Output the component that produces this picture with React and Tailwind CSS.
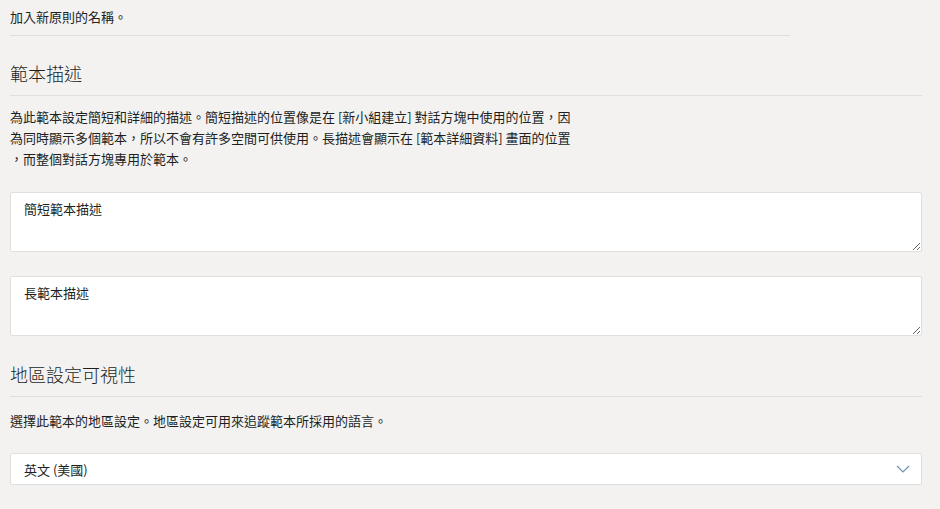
import React from "react";

function Heading({ children }) {
  return (
    <h2 className="text-[18px] leading-[24px] font-light text-[#201f1e] pb-[10px] border-b border-[#e1dfdd]">
      {children}
    </h2>
  );
}

export default function App() {
  return (
    <div
      className="w-[940px] h-[509px] overflow-hidden bg-[#f3f2f1] pl-[10px] pr-[18px] text-[13px] leading-[21px] text-[#201f1e]"
      style={{ fontFamily: '"Noto Sans CJK TC", "Noto Sans", sans-serif' }}
    >
      {/* name hint */}
      <div className="w-[780px] pt-[6px] pb-[8px] border-b border-[#e1dfdd]">加入新原則的名稱。</div>

      {/* 範本描述 */}
      <div className="mt-[25px]">
        <Heading>範本描述</Heading>
      </div>
      <p className="mt-[10px]">
        為此範本設定簡短和詳細的描述。簡短描述的位置像是在 [新小組建立] 對話方塊中使用的位置，因
        <br />
        為同時顯示多個範本，所以不會有許多空間可供使用。長描述會顯示在 [範本詳細資料] 畫面的位置
        <br />
        ，而整個對話方塊專用於範本。
      </p>
      <textarea
        className="mt-[23px] block w-full h-[60px] bg-white border border-[#e1dfdd] rounded-[2px] px-[13px] pt-[5px] resize-y outline-none placeholder:text-[#201f1e]"
        placeholder="簡短範本描述"
      />
      <textarea
        className="mt-[24px] block w-full h-[60px] bg-white border border-[#e1dfdd] rounded-[2px] px-[13px] pt-[5px] resize-y outline-none placeholder:text-[#201f1e]"
        placeholder="長範本描述"
      />

      {/* 地區設定可視性 */}
      <div className="mt-[26px]">
        <Heading>地區設定可視性</Heading>
      </div>
      <p className="mt-[13px]">選擇此範本的地區設定。地區設定可用來追蹤範本所採用的語言。</p>
      <div className="mt-[22px] h-[32px] bg-white border border-[#e1dfdd] rounded-[2px] flex items-center justify-between pl-[13px] pr-[11px]">
        <span>英文 (美國)</span>
        <svg width="14" height="8" viewBox="0 0 14 8" fill="none">
          <path d="M1 1l6 6 6-6" stroke="#6e8fb5" strokeWidth="1.1" />
        </svg>
      </div>
    </div>
  );
}
